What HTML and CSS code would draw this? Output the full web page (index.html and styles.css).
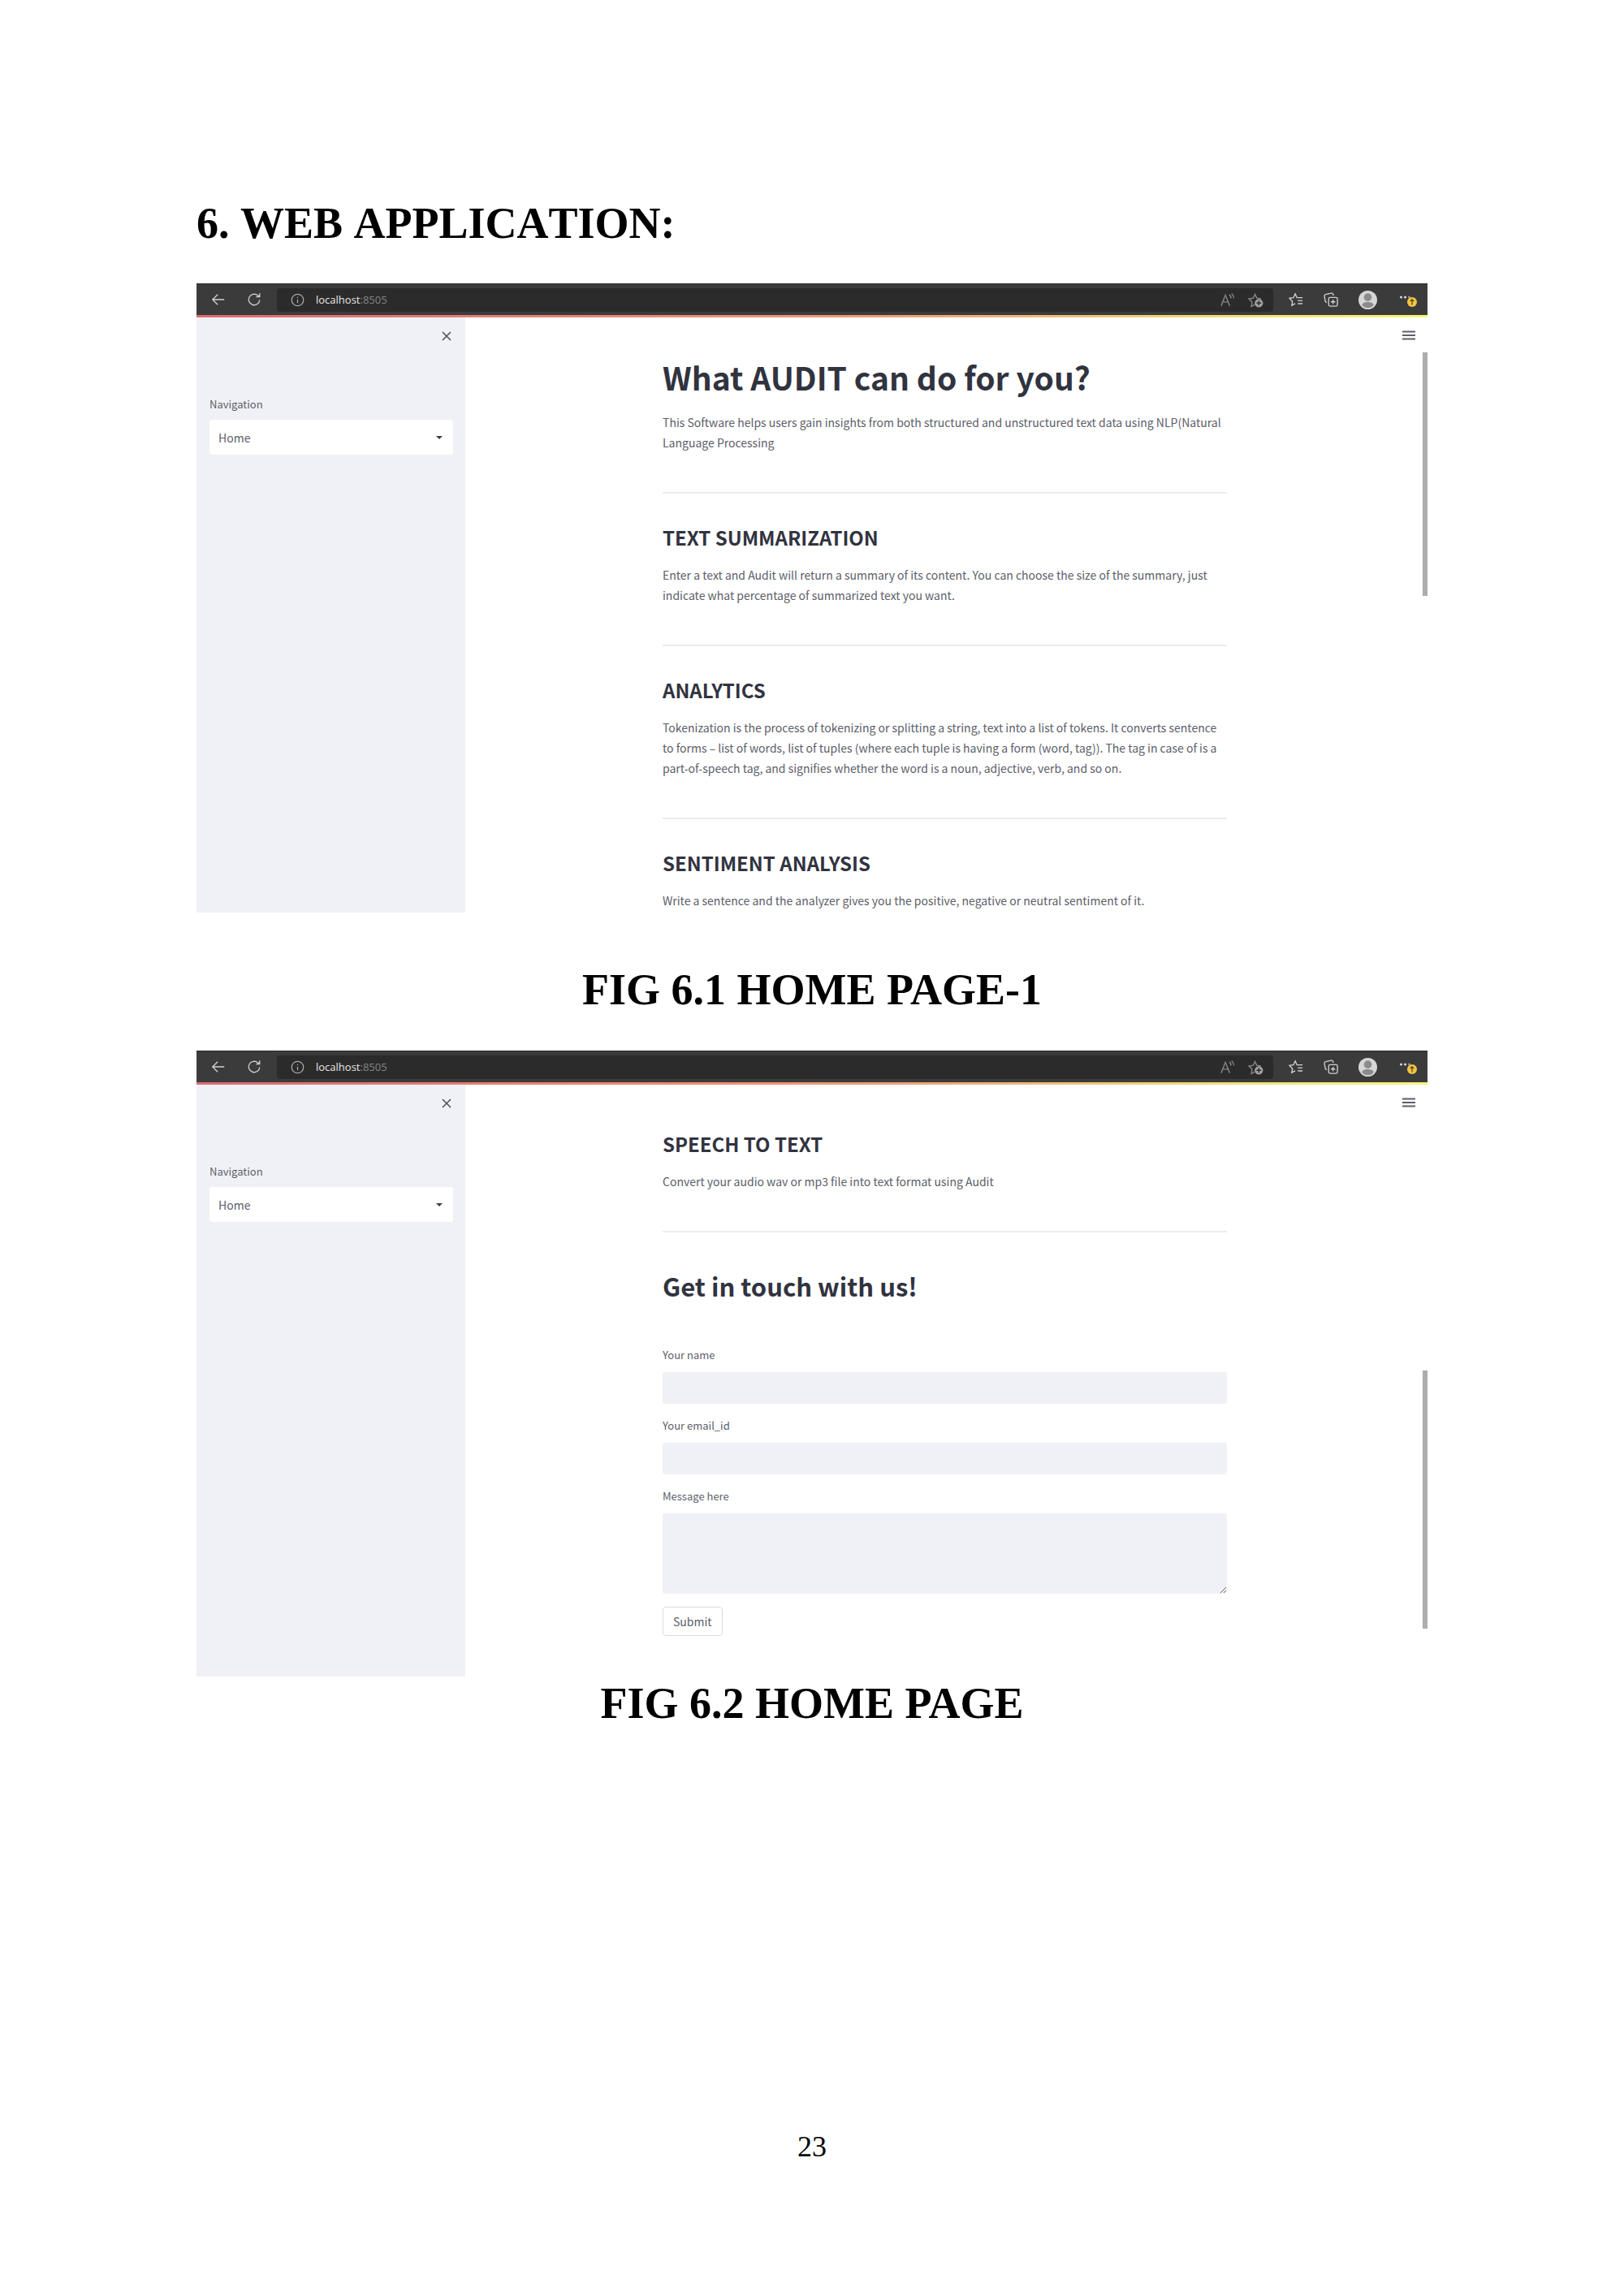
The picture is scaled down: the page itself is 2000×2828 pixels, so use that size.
FILE: index.html
```html
<!DOCTYPE html>
<html lang="en">
<head>
<meta charset="utf-8">
<meta name="viewport" content="width=device-width, initial-scale=1">
<title>6. Web Application</title>
<link rel="stylesheet" href="styles.css">
</head>
<body>
<svg class="sprite" aria-hidden="true">
  <symbol id="i-back" viewBox="0 0 20 20"><path d="M9 3 2 10l7 7M2 10h16"/></symbol>
  <symbol id="i-reload" viewBox="0 0 20 20"><path d="M17.500 10.500a7.500 7.500 0 1 1-2.600-6.200L17.200 6M17.500 1.500V6.300h-4.800"/></symbol>
  <symbol id="i-info" viewBox="0 0 20 20"><circle cx="10" cy="10" r="8.500"/><path d="M10 9v5.500M10 5.500v1.600"/></symbol>
  <symbol id="i-read" viewBox="0 0 20 20"><path d="M2 17.500 7.500 3.500 13 17.500M4 12.500h7M12.500 3c1.500 1.200 2.200 2.800 2.200 5M15.500 1.500c2 1.800 2.900 4 2.900 6.500"/></symbol>
  <symbol id="i-star-add" viewBox="0 0 20 20"><path d="M9 16 4.300 18.300l.9-5.600L1.200 8.500l5.400-.8L9 2.500l2.400 5.200 5.400.8"/><circle class="fill" cx="14" cy="14" r="5.400"/><path class="cut" d="M14 11v6M11 14h6"/></symbol>
  <symbol id="i-star-list" viewBox="0 0 20 20"><path d="M9 15.500 4.300 18l.9-5.600L1.200 8.200l5.400-.8L9 2l2.400 5.400H19M12.500 11.500H19M12.500 15.500H19"/></symbol>
  <symbol id="i-collect" viewBox="0 0 20 20"><rect x="7" y="7" width="12" height="12" rx="2"/><path d="M13 10v6M10 13h6M4.500 14C3 14 2.600 13 2.300 12L1.200 5.500a2.200 2.200 0 0 1 1.800-2.600L10.500 1.300a2.200 2.200 0 0 1 2.500 1.500l.4 1.700"/></symbol>
  <symbol id="i-avatar" viewBox="0 0 24 24"><circle cx="12" cy="12" r="12" fill="#d6d6d6"/><circle cx="12" cy="8.500" r="5" fill="#8b8b8b"/><path d="M4.500 18.500c1-3 4-3.800 7.500-3.800s6.500.8 7.500 3.800c-2 2.400-4.600 3.700-7.500 3.700s-5.500-1.300-7.500-3.700z" fill="#8b8b8b"/></symbol>
  <symbol id="i-more" viewBox="0 0 22 20"><circle cx="2.500" cy="7" r="1.500" fill="#ddd"/><circle cx="7.500" cy="7" r="1.500" fill="#ddd"/><circle cx="12.500" cy="7" r="1.500" fill="#999"/><circle cx="16" cy="13" r="6" fill="#f2c545"/><path d="M16 16.500V10M13.800 12 16 9.800l2.200 2.200" stroke="#5a4510" stroke-width="1.300" fill="none"/></symbol>
  <symbol id="i-close" viewBox="0 0 12 12"><path d="M1 1l10 10M11 1 1 11"/></symbol>
  <symbol id="i-menu" viewBox="0 0 16 12"><path d="M0 1.500h16M0 6h16M0 10.500h16"/></symbol>
  <symbol id="i-caret" viewBox="0 0 8 4"><path d="M0 0h8L4 4z"/></symbol>
</svg>

<div class="page">
  <h1 class="page-title">6. WEB APPLICATION:</h1>

  <figure class="figure">
    <div class="browser">
      <div class="toolbar">
        <button class="tool" aria-label="Back"><svg><use href="#i-back"/></svg></button>
        <button class="tool" aria-label="Reload"><svg><use href="#i-reload"/></svg></button>
        <div class="address">
          <svg><use href="#i-info"/></svg>
          <span class="url">localhost<span class="port">:8505</span></span>
          <button class="tool dim" aria-label="Read aloud"><svg><use href="#i-read"/></svg></button>
          <button class="tool dim" aria-label="Add to favourites"><svg><use href="#i-star-add"/></svg></button>
        </div>
        <div class="tools">
          <button class="tool" aria-label="Favourites"><svg><use href="#i-star-list"/></svg></button>
          <button class="tool" aria-label="Collections"><svg><use href="#i-collect"/></svg></button>
          <button class="tool avatar" aria-label="Profile"><svg><use href="#i-avatar"/></svg></button>
          <button class="tool more" aria-label="More"><svg><use href="#i-more"/></svg></button>
        </div>
      </div>
      <div class="app">
        <aside class="sidebar">
          <button class="close" aria-label="Close sidebar"><svg><use href="#i-close"/></svg></button>
          <label class="label" for="nav-1">Navigation</label>
          <div class="select">
            <select id="nav-1"><option>Home</option></select>
            <svg><use href="#i-caret"/></svg>
          </div>
        </aside>
        <main class="main">
          <button class="menu" aria-label="Menu"><svg><use href="#i-menu"/></svg></button>
          <span class="thumb thumb-top"></span>
          <div class="content">
            <h2 class="title">What AUDIT can do for you?</h2>
            <p>This Software helps users gain insights from both structured and unstructured text data using NLP(Natural Language Processing</p>
            <hr>
            <h3>TEXT SUMMARIZATION</h3>
            <p>Enter a text and Audit will return a summary of its content. You can choose the size of the summary, just indicate what percentage of summarized text you want.</p>
            <hr>
            <h3>ANALYTICS</h3>
            <p>Tokenization is the process of tokenizing or splitting a string, text into a list of tokens. It converts sentence to forms – list of words, list of tuples (where each tuple is having a form (word, tag)). The tag in case of is a part-of-speech tag, and signifies whether the word is a noun, adjective, verb, and so on.</p>
            <hr>
            <h3>SENTIMENT ANALYSIS</h3>
            <p>Write a sentence and the analyzer gives you the positive, negative or neutral sentiment of it.</p>
          </div>
        </main>
      </div>
    </div>
    <figcaption class="caption caption-spaced">FIG 6.1 HOME PAGE-1</figcaption>
  </figure>

  <figure class="figure">
    <div class="browser">
      <div class="toolbar">
        <button class="tool" aria-label="Back"><svg><use href="#i-back"/></svg></button>
        <button class="tool" aria-label="Reload"><svg><use href="#i-reload"/></svg></button>
        <div class="address">
          <svg><use href="#i-info"/></svg>
          <span class="url">localhost<span class="port">:8505</span></span>
          <button class="tool dim" aria-label="Read aloud"><svg><use href="#i-read"/></svg></button>
          <button class="tool dim" aria-label="Add to favourites"><svg><use href="#i-star-add"/></svg></button>
        </div>
        <div class="tools">
          <button class="tool" aria-label="Favourites"><svg><use href="#i-star-list"/></svg></button>
          <button class="tool" aria-label="Collections"><svg><use href="#i-collect"/></svg></button>
          <button class="tool avatar" aria-label="Profile"><svg><use href="#i-avatar"/></svg></button>
          <button class="tool more" aria-label="More"><svg><use href="#i-more"/></svg></button>
        </div>
      </div>
      <div class="app">
        <aside class="sidebar">
          <button class="close" aria-label="Close sidebar"><svg><use href="#i-close"/></svg></button>
          <label class="label" for="nav-2">Navigation</label>
          <div class="select">
            <select id="nav-2"><option>Home</option></select>
            <svg><use href="#i-caret"/></svg>
          </div>
        </aside>
        <main class="main main-contact">
          <button class="menu" aria-label="Menu"><svg><use href="#i-menu"/></svg></button>
          <span class="thumb thumb-bottom"></span>
          <div class="content">
            <h3>SPEECH TO TEXT</h3>
            <p>Convert your audio wav or mp3 file into text format using Audit</p>
            <hr>
            <h2 class="subtitle">Get in touch with us!</h2>
            <form class="form">
              <div class="field"><label class="label" for="name">Your name</label><input id="name" type="text"></div>
              <div class="field"><label class="label" for="email">Your email_id</label><input id="email" type="text"></div>
              <div class="field"><label class="label" for="message">Message here</label><textarea id="message"></textarea></div>
              <button class="submit" type="button">Submit</button>
            </form>
          </div>
        </main>
      </div>
    </div>
    <figcaption class="caption">FIG 6.2 HOME PAGE</figcaption>
  </figure>

  <footer class="page-number">23</footer>
</div>
</body>
</html>
```
FILE: styles.css
```css
* { box-sizing: border-box; }

body {
  margin: 0;
  background: #fff;
  color: #000;
  font-family: "Liberation Serif", "Times New Roman", serif;
}

h1, h2, h3, p, figure { margin: 0; }
button, input, select, textarea { font: inherit; color: inherit; border: 0; padding: 0; margin: 0; background: none; }
svg { display: block; fill: none; stroke: currentColor; }
.sprite { position: absolute; width: 0; height: 0; }

.page {
  max-width: 1596px;
  margin: 0 auto;
  padding: 244px 40px 148px;
}

.page-title, .caption {
  font-size: 54px;
  line-height: 62px;
  font-weight: 700;
}
.page-title { margin-bottom: 43px; font-kerning: none; }
.caption { padding-top: 2px; text-align: center; }
.caption-spaced { padding: 64px 0 44px; }

.page-number {
  margin-top: 494px;
  font-size: 36px;
  line-height: 42px;
  text-align: center;
}

/* Browser window */
.browser {
  overflow: hidden;
  font-family: "Noto Sans CJK SC", "Noto Sans", sans-serif;
  font-size: 14px;
  color: #5c5e69;
}

.toolbar {
  display: flex;
  align-items: center;
  height: 39px;
  padding-left: 18px;
  background: #3b3b3b;
  border-top: 1px solid #2b2b2b;
  color: #d0d0d0;
}
.tool { width: 18px; height: 18px; flex: none; }
.tool svg { width: 100%; height: 100%; stroke-width: 1.5px; }
.toolbar > .tool { margin-right: 26px; }
.toolbar > .tool + .tool { margin-right: 19px; }
.dim { color: #858585; width: 19px; height: 19px; }
.fill { fill: #a0a0a0; stroke: none; }
.cut { stroke: #2b2b2b; }

.address {
  display: flex;
  align-items: center;
  flex: 1;
  height: 29px;
  padding: 0 12px 0 17px;
  gap: 16px;
  background: #2b2b2b;
  border-radius: 4px;
}
.address > svg { width: 17px; height: 17px; stroke-width: 1.5px; color: #a8a8a8; }
.url { flex: 1; margin-left: -2px; font-family: "Open Sans", sans-serif; font-size: 13px; color: #e8e8e8; }
.port { color: #858585; }

.tools { display: flex; align-items: center; gap: 25px; padding: 0 12px 0 19px; }
.avatar { width: 23px; height: 23px; margin-right: 1px; }
.avatar svg, .more svg { stroke: none; }
.more { width: 24px; height: 20px; }

/* App window */
.app {
  display: flex;
  border-top: 3px solid;
  border-image: linear-gradient(90deg, #dd6a72, #ee9c78 55%, #f0e278 85%, #f8f47c) 1;
}

.sidebar {
  display: flex;
  flex-direction: column;
  width: 331px;
  flex: none;
  padding: 17px 15px 0 16px;
  background: #f0f1f6;
}
.close { align-self: flex-end; width: 12px; height: 12px; margin-right: 2px; color: #4b4d58; }
.close svg { width: 12px; height: 12px; stroke-width: 1.5px; }
.sidebar .label { margin: 68px 0 9px; }
.label { display: block; font-size: 13px; line-height: 20px; }

.select { position: relative; }
.select select {
  appearance: none;
  width: 100%;
  height: 43px;
  padding: 0 11px;
  background: #fff;
  border-radius: 4px;
}
.select svg { position: absolute; right: 13px; top: 20px; width: 8px; height: 4px; fill: #3c3e48; stroke: none; pointer-events: none; }

.main {
  position: relative;
  flex: 1;
  padding: 49px 4px 2px 0;
}
.main-contact { padding-top: 57px; padding-bottom: 50px; }
.menu { position: absolute; top: 16px; right: 15px; width: 16px; height: 12px; color: #5c5e69; }
.menu svg { width: 16px; height: 12px; stroke-width: 2px; }
.thumb { position: absolute; right: 0; width: 6px; background: #adadb0; }
.thumb-top { top: 43px; height: 300px; }
.thumb-bottom { bottom: 59px; height: 318px; }

.content { max-width: 695px; margin: 0 auto; }
.content p { line-height: 25px; }
.content hr { height: 2px; margin: 48px 0 38px; border: 0; background: #ececef; }
.title, .subtitle, .content h3 { color: #31333f; }
.title { margin-bottom: 20px; font-size: 39px; line-height: 48px; font-weight: 700; }
.content h3 { margin-bottom: 18px; font-size: 24px; line-height: 32px; font-weight: 700; }
.subtitle { margin: 46px 0 55px; font-size: 31px; line-height: 40px; font-weight: 700; }

.field { margin-bottom: 17px; }
.field .label { margin-bottom: 11px; }
.field input, .field textarea {
  display: block;
  width: 100%;
  height: 39px;
  padding: 8px 12px;
  background: #f0f1f6;
  border-radius: 3px;
}
.field textarea { height: 99px; resize: vertical; }
.form .field:nth-child(3) { margin-bottom: 16px; }
.submit {
  height: 36px;
  padding: 0 12px;
  border: 1px solid #dddde2;
  border-radius: 4px;
  background: #fff;
}
```
